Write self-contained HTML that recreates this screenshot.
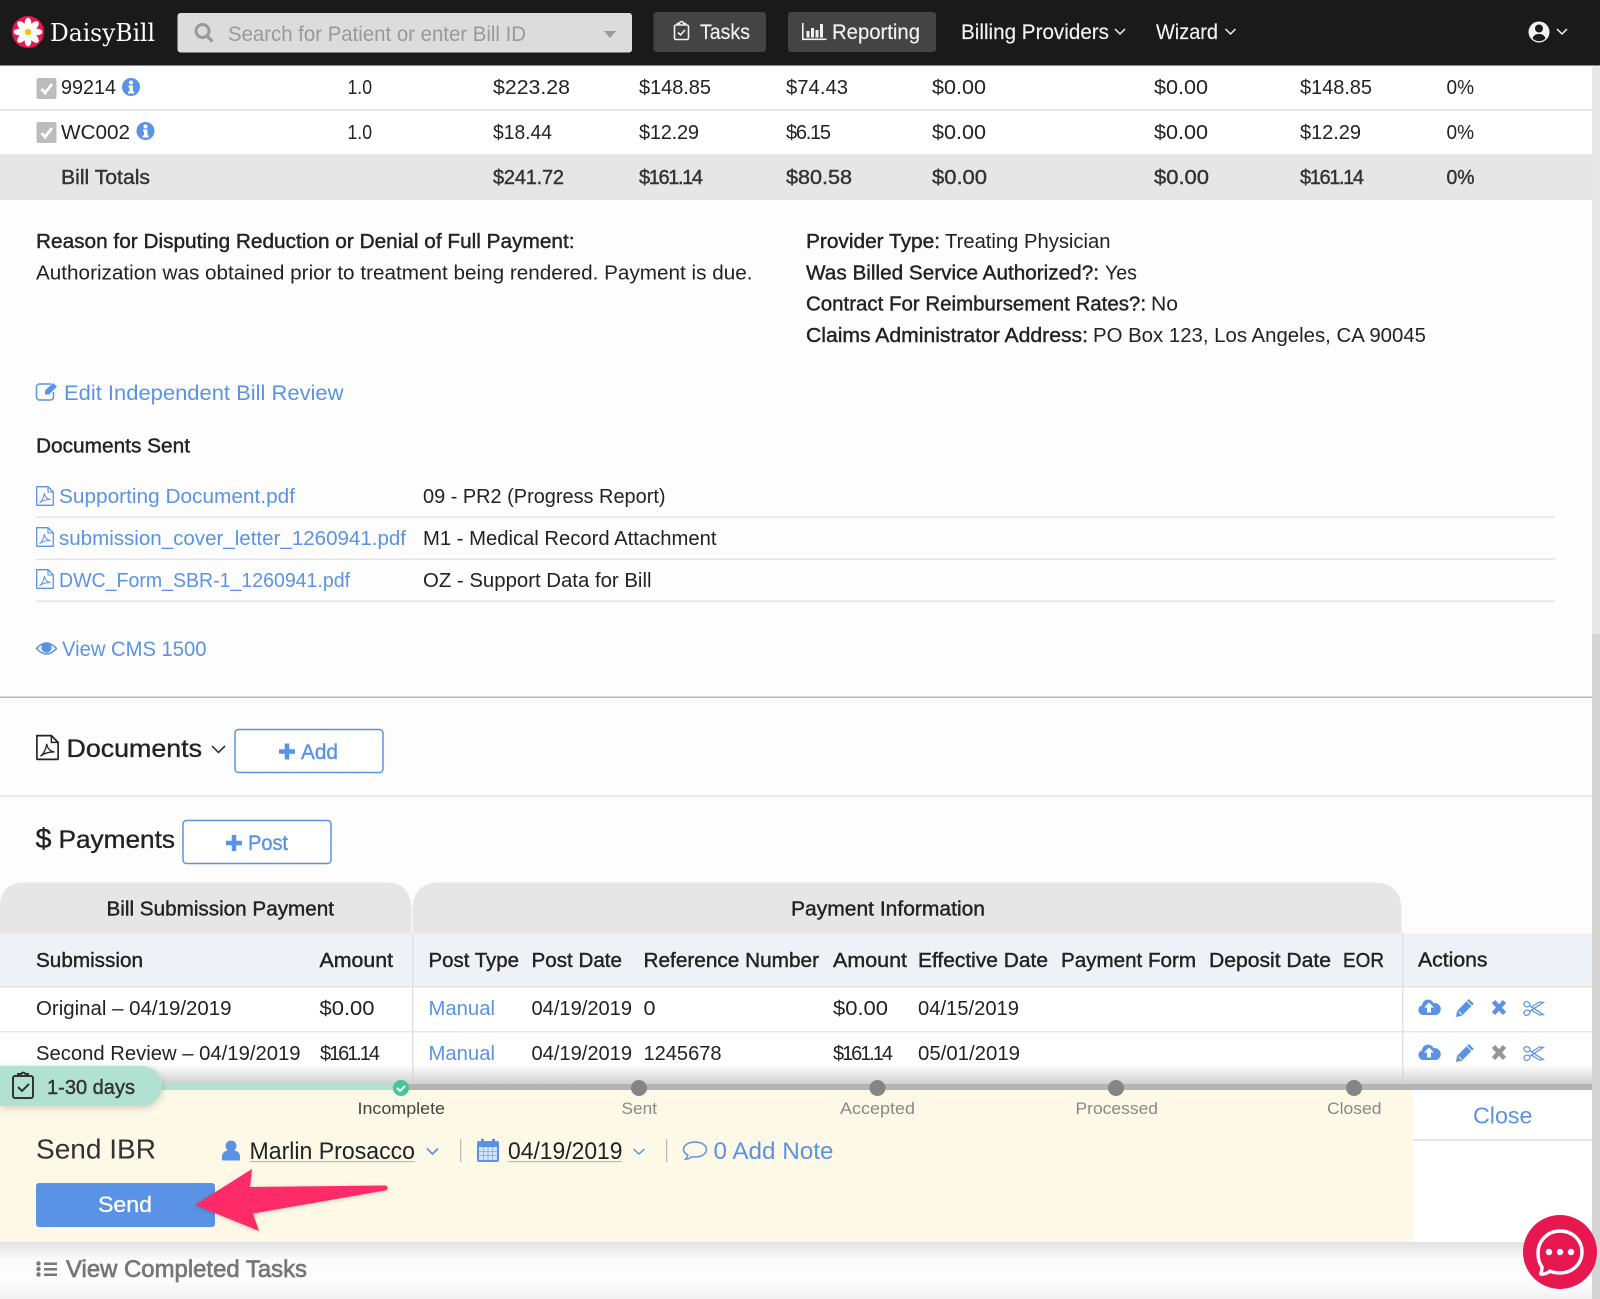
<!DOCTYPE html>
<html lang="en">
<head>
<meta charset="utf-8">
<title>DaisyBill</title>
<style>
html,body{margin:0;padding:0;background:#fdfdfd;width:1600px;height:1299px;overflow:hidden}
svg{display:block}
text{font-family:"Liberation Sans",sans-serif;font-size:20px;fill:#222;white-space:pre}
.s{stroke:#222;stroke-width:.4}
.g{fill:#333;stroke:#333;stroke-width:.4}
.a{fill:#5a93e6}
.n{fill:#f2f2f2;font-size:21px;stroke:#f2f2f2;stroke-width:.15}
.l{font-size:21px;fill:#5a93e6}
.m{font-size:17px;fill:#888}
.h{font-size:25px;fill:#222;stroke:#222;stroke-width:.35}
.b{font-size:21px;fill:#5a93e6;stroke:#5a93e6;stroke-width:.4}
.u{font-size:24px;fill:#222}
</style>
</head>
<body>
<svg xmlns="http://www.w3.org/2000/svg" width="1600" height="1299" viewBox="0 0 1600 1299">
<defs>
<symbol id="pdf" viewBox="0 0 18 20" overflow="visible">
<path d="M.7.7h11.300l5.300 5.300v12.800a.5.5 0 0 1-.5.5H1.200a.5.5 0 0 1-.5-.5z" fill="none" stroke="currentColor" stroke-width="1.300"/>
<path d="M12 .7v5.300h5.300" fill="none" stroke="currentColor" stroke-width="1.100"/>
<path d="M3.400 16.700c2.200-1 4.500-5.400 5-9.600.4 3.600 2.800 6 6.200 6.400-3.600-.2-7.600.8-11.200 3.200z" fill="none" stroke="currentColor" stroke-width="1"/>
</symbol>
<symbol id="chk" viewBox="0 0 20 21" overflow="visible">
<rect width="20" height="21" rx="2" fill="#bcbcbc"/>
<path d="M5 11l3.500 4 7-9" fill="none" stroke="#fff" stroke-width="2.800"/>
</symbol>
<symbol id="inf" viewBox="0 0 18 18" overflow="visible">
<circle cx="9" cy="9" r="9" fill="#5a93e6"/>
<circle cx="9" cy="4.500" r="2" fill="#fff"/>
<path d="M6.500 7.500H11v6h1.200v2H6v-2h1.500v-4h-1z" fill="#fff"/>
</symbol>
<symbol id="cloud" viewBox="0 0 22 16" overflow="visible">
<path d="M5 16a5 5 0 0 1-1-9.800A6 6 0 0 1 15.500 4.200 4.800 4.800 0 0 1 18 16z" fill="#5a93e6"/>
<path d="M11 3.500l5 5h-3v5h-4v-5H6z" fill="#fff"/>
</symbol>
<symbol id="pen" viewBox="0 0 18 18" overflow="visible">
<path d="M12.800 0l5 4.800L5.800 16.800 0 18l1-6z" fill="#5a93e6"/>
<path d="M2.500 12.500l3.300 3.200" stroke="#fff" stroke-width="1" fill="none"/>
<path d="M11 2.200l4.800 4.800" stroke="#fff" stroke-width="1" fill="none"/>
</symbol>
<symbol id="sci" viewBox="0 0 22 16" overflow="visible">
<g fill="none" stroke="#5a93e6" stroke-width="1.300">
<ellipse cx="4" cy="3.500" rx="3.300" ry="2.700" transform="rotate(20 4 3.500)"/>
<ellipse cx="4" cy="12.500" rx="3.300" ry="2.700" transform="rotate(-20 4 12.500)"/>
<path d="M7 5l14.500 9.500-4 .4L8 9.300"/>
<path d="M7 11L21.500 1.500l-4-.4L8 6.700"/>
</g>
</symbol>
<linearGradient id="fade" x1="0" y1="0" x2="0" y2="1">
<stop offset="0" stop-color="#d4d4d4" stop-opacity="0"/>
<stop offset="1" stop-color="#d0d0d0"/>
</linearGradient>
<linearGradient id="foot" x1="0" y1="0" x2="0" y2="1">
<stop offset="0" stop-color="#e2e2e2"/>
<stop offset=".32" stop-color="#fbfbfb"/>
<stop offset=".65" stop-color="#fdfdfd"/>
<stop offset="1" stop-color="#f3f3f3"/>
</linearGradient>
</defs>

<!-- page background -->
<rect width="1600" height="1299" fill="#fdfdfd"/>
<rect y="65" width="1592" height="89" fill="#fff"/>
<rect y="109" width="1592" height="2" fill="#e6e6e6"/>
<rect y="154" width="1592" height="46" fill="#e6e6e6"/>

<!-- scrollbar -->
<rect x="1592" y="66" width="8" height="1233" fill="#e8e8e8" rx="3"/>
<rect x="1592" y="634" width="8" height="665" fill="#d5d5d5"/>

<!-- bill table -->
<use href="#chk" x="36.500" y="78" width="20" height="21"/>
<text x="61" y="94" textLength="55" lengthAdjust="spacingAndGlyphs">99214</text>
<use href="#inf" x="122" y="78" width="18" height="18"/>
<use href="#chk" x="36.500" y="122" width="20" height="21"/>
<text x="61" y="139" textLength="69" lengthAdjust="spacingAndGlyphs">WC002</text>
<use href="#inf" x="136.500" y="122" width="18" height="18"/>

<text x="347.500" y="94" textLength="24.500" lengthAdjust="spacingAndGlyphs">1.0</text>
<text x="493" y="94" textLength="77" lengthAdjust="spacingAndGlyphs">$223.28</text>
<text x="639" y="94" textLength="72" lengthAdjust="spacing">$148.85</text>
<text x="786" y="94" textLength="62" lengthAdjust="spacingAndGlyphs">$74.43</text>
<text x="932" y="94" textLength="54" lengthAdjust="spacingAndGlyphs">$0.00</text>
<text x="1154" y="94" textLength="54" lengthAdjust="spacingAndGlyphs">$0.00</text>
<text x="1300" y="94" textLength="72" lengthAdjust="spacing">$148.85</text>
<text x="1446.500" y="94" textLength="27.500" lengthAdjust="spacingAndGlyphs">0%</text>

<text x="347.500" y="139" textLength="24.500" lengthAdjust="spacingAndGlyphs">1.0</text>
<text x="493" y="139" textLength="59" lengthAdjust="spacingAndGlyphs">$18.44</text>
<text x="639" y="139" textLength="60" lengthAdjust="spacing">$12.29</text>
<text x="786" y="139" textLength="45" lengthAdjust="spacing">$6.15</text>
<text x="932" y="139" textLength="54" lengthAdjust="spacingAndGlyphs">$0.00</text>
<text x="1154" y="139" textLength="54" lengthAdjust="spacingAndGlyphs">$0.00</text>
<text x="1300" y="139" textLength="61" lengthAdjust="spacing">$12.29</text>
<text x="1446.500" y="139" textLength="27.500" lengthAdjust="spacingAndGlyphs">0%</text>

<text class="g" x="61" y="184" textLength="89" lengthAdjust="spacingAndGlyphs">Bill Totals</text>
<text class="g" x="493" y="184" textLength="71" lengthAdjust="spacing">$241.72</text>
<text class="g" x="639" y="184" textLength="64" lengthAdjust="spacing">$161.14</text>
<text class="g" x="786" y="184" textLength="66" lengthAdjust="spacingAndGlyphs">$80.58</text>
<text class="g" x="932" y="184" textLength="55" lengthAdjust="spacingAndGlyphs">$0.00</text>
<text class="g" x="1154" y="184" textLength="55" lengthAdjust="spacingAndGlyphs">$0.00</text>
<text class="g" x="1300" y="184" textLength="64" lengthAdjust="spacing">$161.14</text>
<text class="g" x="1446.500" y="184" textLength="28" lengthAdjust="spacingAndGlyphs">0%</text>

<!-- review details -->
<text class="s" x="36" y="248" textLength="538.500" lengthAdjust="spacingAndGlyphs">Reason for Disputing Reduction or Denial of Full Payment:</text>
<text x="36" y="279.500" textLength="716.500" lengthAdjust="spacingAndGlyphs">Authorization was obtained prior to treatment being rendered. Payment is due.</text>
<text class="s" x="806" y="248" textLength="134" lengthAdjust="spacingAndGlyphs">Provider Type:</text>
<text x="945" y="248" textLength="165.500" lengthAdjust="spacingAndGlyphs">Treating Physician</text>
<text class="s" x="806" y="279.500" textLength="293" lengthAdjust="spacingAndGlyphs">Was Billed Service Authorized?:</text>
<text x="1105" y="279.500" textLength="32" lengthAdjust="spacingAndGlyphs">Yes</text>
<text class="s" x="806" y="310.500" textLength="340" lengthAdjust="spacingAndGlyphs">Contract For Reimbursement Rates?:</text>
<text x="1151" y="310.500" textLength="27" lengthAdjust="spacingAndGlyphs">No</text>
<text class="s" x="806" y="342" textLength="282" lengthAdjust="spacingAndGlyphs">Claims Administrator Address:</text>
<text x="1093" y="342" textLength="333" lengthAdjust="spacingAndGlyphs">PO Box 123, Los Angeles, CA 90045</text>

<!-- edit link -->
<path d="M53.500 392v5a3 3 0 0 1-3 3H39.500a3 3 0 0 1-3-3v-10a3 3 0 0 1 3-3H51" fill="none" stroke="#5a93e6" stroke-width="1.500"/>
<path d="M45 390.500l8-7.500 4 3.500-8 8H45z" fill="#5a93e6"/>
<text class="l" x="64" y="400" textLength="279.500" lengthAdjust="spacingAndGlyphs">Edit Independent Bill Review</text>

<text class="s" x="36" y="452.500" textLength="154" lengthAdjust="spacingAndGlyphs">Documents Sent</text>

<g style="color:#5a93e6">
<use href="#pdf" x="36" y="486" width="18" height="20"/>
<use href="#pdf" x="36" y="527" width="18" height="20"/>
<use href="#pdf" x="36" y="569" width="18" height="20"/>
</g>
<text class="a" x="59" y="503" textLength="236" lengthAdjust="spacingAndGlyphs">Supporting Document.pdf</text>
<text x="423" y="503" textLength="242.500" lengthAdjust="spacingAndGlyphs">09 - PR2 (Progress Report)</text>
<rect x="36" y="516.500" width="1519" height="1.500" fill="#e4e4e4"/>
<text class="a" x="59" y="545" textLength="347" lengthAdjust="spacingAndGlyphs">submission_cover_letter_1260941.pdf</text>
<text x="423" y="545" textLength="293.500" lengthAdjust="spacingAndGlyphs">M1 - Medical Record Attachment</text>
<rect x="36" y="558.500" width="1519" height="1.500" fill="#e4e4e4"/>
<text class="a" x="59" y="587" textLength="291" lengthAdjust="spacingAndGlyphs">DWC_Form_SBR-1_1260941.pdf</text>
<text x="423" y="587" textLength="228.500" lengthAdjust="spacingAndGlyphs">OZ - Support Data for Bill</text>
<rect x="36" y="600.500" width="1519" height="1.500" fill="#e4e4e4"/>

<!-- view cms -->
<path d="M36.500 648.500Q46.500 637.500 56.500 648.500 46.500 659.500 36.500 648.500z" fill="none" stroke="#5a93e6" stroke-width="1.500"/>
<circle cx="46.500" cy="647.500" r="5.200" fill="#5a93e6"/>
<text class="l" x="62" y="656" textLength="144.500" lengthAdjust="spacingAndGlyphs">View CMS 1500</text>

<rect y="696.500" width="1592" height="1.500" fill="#b9b9b9"/>

<!-- documents heading -->
<g style="color:#222"><use href="#pdf" x="36" y="734" width="23" height="27"/></g>
<text class="h" x="66.500" y="757" textLength="135.500" lengthAdjust="spacingAndGlyphs">Documents</text>
<path d="M212 746l6.500 6.500 6.500-6.500" fill="none" stroke="#222" stroke-width="1.500"/>
<rect x="235" y="729.500" width="148" height="43" rx="3.500" fill="#fff" stroke="#5a93e6" stroke-width="1.500"/>
<path d="M279 751.500h16M287 743.500v16" stroke="#5a93e6" stroke-width="4.500" fill="none"/>
<text class="b" x="301" y="759" textLength="37" lengthAdjust="spacingAndGlyphs">Add</text>
<rect y="795.500" width="1592" height="1.500" fill="#e4e4e4"/>

<!-- payments heading -->
<text class="h" x="35.500" y="848" textLength="16" lengthAdjust="spacingAndGlyphs" style="font-size:28px">$</text>
<text class="h" x="58.500" y="848" textLength="116.500" lengthAdjust="spacingAndGlyphs">Payments</text>
<rect x="183" y="820.500" width="148" height="43" rx="3.500" fill="#fff" stroke="#5a93e6" stroke-width="1.500"/>
<path d="M226 843h16M234 835v16" stroke="#5a93e6" stroke-width="4.500" fill="none"/>
<text class="b" x="248" y="850" textLength="40" lengthAdjust="spacingAndGlyphs">Post</text>

<!-- tabs -->
<path d="M0 934V907Q0 882.500 25 882.500H386Q411.500 882.500 411.500 910V934z" fill="#e6e6e6"/>
<path d="M412.500 934V910Q412.500 882.500 441 882.500H1373Q1401.500 882.500 1401.500 910V934z" fill="#e6e6e6"/>
<text class="s" x="106.500" y="915.500" textLength="227.500" lengthAdjust="spacingAndGlyphs">Bill Submission Payment</text>
<text class="s" x="791" y="915.500" textLength="194" lengthAdjust="spacingAndGlyphs">Payment Information</text>

<!-- payments table -->
<rect y="933.500" width="1592" height="52.500" fill="#eef1f6"/>
<rect y="986" width="1592" height="100" fill="#fff"/>
<rect y="986" width="1592" height="1.500" fill="#e6e6e6"/>
<rect y="1031" width="1592" height="1.500" fill="#e6e6e6"/>
<rect x="412" y="933.500" width="1.500" height="152.500" fill="#e0e0e0"/>
<rect x="1402" y="933.500" width="1.500" height="152.500" fill="#e0e0e0"/>

<text class="s" x="36" y="967" textLength="107" lengthAdjust="spacingAndGlyphs">Submission</text>
<text class="s" x="319.500" y="967" textLength="73.500" lengthAdjust="spacingAndGlyphs">Amount</text>
<text class="s" x="428.500" y="967" textLength="90.500" lengthAdjust="spacingAndGlyphs">Post Type</text>
<text class="s" x="531.500" y="967" textLength="90.500" lengthAdjust="spacingAndGlyphs">Post Date</text>
<text class="s" x="643.500" y="967" textLength="175.500" lengthAdjust="spacingAndGlyphs">Reference Number</text>
<text class="s" x="833" y="967" textLength="74" lengthAdjust="spacingAndGlyphs">Amount</text>
<text class="s" x="918" y="967" textLength="130" lengthAdjust="spacingAndGlyphs">Effective Date</text>
<text class="s" x="1061" y="967" textLength="135" lengthAdjust="spacingAndGlyphs">Payment Form</text>
<text class="s" x="1209" y="967" textLength="122" lengthAdjust="spacingAndGlyphs">Deposit Date</text>
<text class="s" x="1343" y="967" textLength="41" lengthAdjust="spacingAndGlyphs">EOR</text>
<text class="s" x="1418" y="966.500" textLength="69.500" lengthAdjust="spacingAndGlyphs">Actions</text>

<text x="36" y="1015" textLength="195.500" lengthAdjust="spacingAndGlyphs">Original – 04/19/2019</text>
<text x="319.500" y="1015" textLength="55" lengthAdjust="spacingAndGlyphs">$0.00</text>
<text class="a" x="428.500" y="1015" textLength="66.500" lengthAdjust="spacingAndGlyphs">Manual</text>
<text x="531.500" y="1015" textLength="100.500" lengthAdjust="spacingAndGlyphs">04/19/2019</text>
<text x="643.500" y="1015" textLength="12" lengthAdjust="spacingAndGlyphs">0</text>
<text x="833" y="1015" textLength="55" lengthAdjust="spacingAndGlyphs">$0.00</text>
<text x="918" y="1015" textLength="101" lengthAdjust="spacingAndGlyphs">04/15/2019</text>

<text x="36" y="1060" textLength="264.500" lengthAdjust="spacingAndGlyphs">Second Review – 04/19/2019</text>
<text x="320" y="1060" textLength="60" lengthAdjust="spacing">$161.14</text>
<text class="a" x="428.500" y="1060" textLength="66.500" lengthAdjust="spacingAndGlyphs">Manual</text>
<text x="531.500" y="1060" textLength="100.500" lengthAdjust="spacingAndGlyphs">04/19/2019</text>
<text x="643.500" y="1060" textLength="78" lengthAdjust="spacingAndGlyphs">1245678</text>
<text x="833" y="1060" textLength="60" lengthAdjust="spacing">$161.14</text>
<text x="918" y="1060" textLength="102" lengthAdjust="spacingAndGlyphs">05/01/2019</text>

<!-- action icons -->
<use href="#cloud" x="1418" y="999" width="22" height="16"/>
<use href="#pen" x="1456" y="999" width="18" height="18"/>
<path d="M1493.500 1001.500l11 12M1504.500 1001.500l-11 12" stroke="#5a93e6" stroke-width="4.600" fill="none"/>
<use href="#sci" x="1523" y="1001" width="21" height="15"/>
<use href="#cloud" x="1418" y="1044" width="22" height="16"/>
<use href="#pen" x="1456" y="1044" width="18" height="18"/>
<path d="M1493.500 1046.500l11 12M1504.500 1046.500l-11 12" stroke="#969696" stroke-width="4.600" fill="none"/>
<use href="#sci" x="1523" y="1046" width="21" height="15"/>

<text x="447" y="1097" textLength="173" lengthAdjust="spacingAndGlyphs" style="fill:#555">Mailed 04/19/2019</text>

<!-- fixed task panel -->
<rect y="1064" width="1592" height="20" fill="url(#fade)"/>
<rect y="1242" width="1592" height="57" fill="url(#foot)"/>
<rect y="1090" width="1413" height="152" fill="#fef9e7"/>
<rect x="1413" y="1090" width="179" height="152" fill="#fff"/>
<rect x="1413" y="1139" width="179" height="2" fill="#e4e4e4"/>
<rect y="1084" width="1592" height="6" fill="#b3b3b3"/>
<rect x="150" y="1084" width="250" height="6" fill="#b1e2d1"/>

<path d="M0 1066H142a20 20 0 0 1 0 40H0z" fill="#b1e2d1" style="filter:drop-shadow(0 2px 4px rgba(0,0,0,.18))"/>
<g fill="none" stroke="#333" stroke-width="2">
<rect x="13" y="1076" width="20" height="22" rx="2"/>
<path d="M18 1076v-2h3a2.500 2.500 0 0 1 4.500 0h2.500v2"/>
<path d="M18 1087l4 4 7-7"/>
</g>
<text class="g" x="47" y="1094" textLength="88" lengthAdjust="spacingAndGlyphs">1-30 days</text>

<circle cx="401" cy="1088" r="8" fill="#46c596"/>
<path d="M397 1088l3 3 5-5" fill="none" stroke="#fff" stroke-width="2"/>
<circle cx="639" cy="1088" r="8" fill="#858585"/>
<circle cx="877.500" cy="1088" r="8" fill="#858585"/>
<circle cx="1116" cy="1088" r="8" fill="#858585"/>
<circle cx="1354" cy="1088" r="8" fill="#858585"/>
<text class="m" x="357.500" y="1114" textLength="87.500" lengthAdjust="spacingAndGlyphs" style="fill:#444">Incomplete</text>
<text class="m" x="621.500" y="1114" textLength="35.500" lengthAdjust="spacingAndGlyphs">Sent</text>
<text class="m" x="840" y="1114" textLength="75" lengthAdjust="spacingAndGlyphs">Accepted</text>
<text class="m" x="1075.500" y="1114" textLength="82.500" lengthAdjust="spacingAndGlyphs">Processed</text>
<text class="m" x="1327" y="1114" textLength="54.500" lengthAdjust="spacingAndGlyphs">Closed</text>

<text x="1473" y="1123.500" textLength="59.500" lengthAdjust="spacingAndGlyphs" style="font-size:23px;fill:#5a93e6">Close</text>

<text x="36" y="1158.500" textLength="120" lengthAdjust="spacingAndGlyphs" style="font-size:28px;fill:#333">Send IBR</text>

<circle cx="231" cy="1146" r="5.500" fill="#5a93e6"/>
<path d="M222 1160v-3.500a6 6 0 0 1 6-6h6a6 6 0 0 1 6 6v3.500a.5.500 0 0 1-.5.500h-17a.5.500 0 0 1-.5-.5z" fill="#5a93e6"/>
<text class="u" x="249.500" y="1159" textLength="165.500" lengthAdjust="spacingAndGlyphs">Marlin Prosacco</text>
<rect x="250" y="1161" width="165" height="1.200" fill="#bbb"/>
<path d="M427 1148.500l5.500 5.500 5.500-5.500" fill="none" stroke="#5a93e6" stroke-width="1.800"/>
<rect x="460" y="1139" width="1.300" height="23" fill="#bbb"/>

<rect x="477" y="1141" width="22" height="21" rx="2" fill="#5a93e6"/>
<rect x="479" y="1147" width="18" height="13" fill="#d6e4fa"/>
<path d="M479 1151.500h18M479 1155.500h18M483.500 1147v13M488 1147v13M492.500 1147v13" stroke="#7ba8ec" stroke-width=".8" fill="none"/>
<rect x="481" y="1138.500" width="3" height="6" rx="1.500" fill="#5a93e6"/>
<rect x="492" y="1138.500" width="3" height="6" rx="1.500" fill="#5a93e6"/>
<text class="u" x="508" y="1159" textLength="114.500" lengthAdjust="spacingAndGlyphs">04/19/2019</text>
<rect x="508" y="1161" width="114" height="1.200" fill="#bbb"/>
<path d="M633.500 1149l5.500 5 5.500-5" fill="none" stroke="#5a93e6" stroke-width="1.500"/>
<rect x="666" y="1139" width="1.300" height="23" fill="#bbb"/>

<path d="M695 1142c6.300 0 11.500 3.300 11.500 7.500s-5.200 7.500-11.500 7.500c-1 0-2 0-3-.3-1.700 1.300-4 2.300-6.500 2.500 1.200-1.300 2-2.700 2.300-4.100-2.600-1.300-4.300-3.300-4.300-5.600 0-4.200 5.200-7.500 11.500-7.500z" fill="none" stroke="#5a93e6" stroke-width="1.500"/>
<text class="u" x="713.500" y="1159" textLength="120" lengthAdjust="spacingAndGlyphs" style="fill:#5a93e6">0 Add Note</text>

<rect x="36" y="1183" width="179" height="44" rx="3" fill="#5a93e6"/>
<text x="98" y="1212" textLength="54" lengthAdjust="spacingAndGlyphs" style="font-size:22px;fill:#fff;stroke:#fff;stroke-width:.3">Send</text>

<path d="M195 1205L252 1169 250 1187 385 1185.500Q388 1186 387.500 1188.500 387 1190 385 1190.500L253 1213.500 259 1231z" fill="#ff2a68" style="filter:drop-shadow(0 1px 2px rgba(0,0,0,.2))"/>

<!-- completed tasks -->
<g fill="#777">
<circle cx="38.500" cy="1263.500" r="2.200"/><circle cx="38.500" cy="1269" r="2.200"/><circle cx="38.500" cy="1274.500" r="2.200"/>
<rect x="44" y="1262.500" width="13" height="2.500"/><rect x="44" y="1268" width="13" height="2.500"/><rect x="44" y="1273.500" width="13" height="2.500"/>
</g>
<text x="66" y="1277" textLength="241" lengthAdjust="spacingAndGlyphs" style="font-size:24px;fill:#777;stroke:#777;stroke-width:.7">View Completed Tasks</text>

<!-- header -->
<rect width="1600" height="65" fill="#1a1a1a"/>
<rect y="65" width="1600" height="1" fill="#888"/>
<circle cx="28" cy="32" r="16" fill="#e8174f"/>
<g fill="#fff">
<ellipse cx="28" cy="23.500" rx="3.400" ry="5.800"/>
<ellipse cx="28" cy="23.500" rx="3.400" ry="5.800" transform="rotate(45 28 32)"/>
<ellipse cx="28" cy="23.500" rx="3.400" ry="5.800" transform="rotate(90 28 32)"/>
<ellipse cx="28" cy="23.500" rx="3.400" ry="5.800" transform="rotate(135 28 32)"/>
<ellipse cx="28" cy="23.500" rx="3.400" ry="5.800" transform="rotate(180 28 32)"/>
<ellipse cx="28" cy="23.500" rx="3.400" ry="5.800" transform="rotate(225 28 32)"/>
<ellipse cx="28" cy="23.500" rx="3.400" ry="5.800" transform="rotate(270 28 32)"/>
<ellipse cx="28" cy="23.500" rx="3.400" ry="5.800" transform="rotate(315 28 32)"/>
</g>
<circle cx="28" cy="32" r="3.300" fill="#f9c80e"/>
<text x="50" y="41" textLength="105" lengthAdjust="spacingAndGlyphs" style="font-family:'DejaVu Serif','Liberation Serif',serif;font-size:24px;fill:#fff">DaisyBill</text>

<rect x="177.500" y="13" width="454.500" height="39.500" rx="3" fill="#dcdcdc"/>
<circle cx="202.500" cy="31" r="6.500" fill="none" stroke="#999" stroke-width="3"/>
<path d="M207 36l5.500 5.500" stroke="#999" stroke-width="3.200" fill="none"/>
<text x="228" y="41" textLength="298" lengthAdjust="spacingAndGlyphs" style="font-size:21px;fill:#999">Search for Patient or enter Bill ID</text>
<path d="M604 31h12l-6 7z" fill="#999"/>

<rect x="653.500" y="12" width="112.500" height="40" rx="3" fill="#444"/>
<g fill="none" stroke="#f2f2f2" stroke-width="1.600">
<rect x="674.500" y="25" width="14" height="14.500" rx="1.500"/>
<path d="M677.500 25v-1.500h2a2 2 0 0 1 4 0h2V25"/>
<path d="M678 32.500l2.500 2.500 4.500-5"/>
</g>
<text class="n" x="700" y="39" textLength="50" lengthAdjust="spacingAndGlyphs">Tasks</text>

<rect x="788" y="12" width="148" height="40" rx="3" fill="#444"/>
<g fill="#f2f2f2">
<rect x="802" y="23" width="1.600" height="17"/><rect x="802" y="38.500" width="24.500" height="1.600"/>
<rect x="806.500" y="31" width="3" height="6.500"/><rect x="811" y="28" width="3" height="9.500"/><rect x="815.500" y="30" width="3" height="7.500"/><rect x="820" y="24" width="3" height="13.500"/>
</g>
<text class="n" x="832" y="39" textLength="88" lengthAdjust="spacingAndGlyphs">Reporting</text>

<text class="n" x="961" y="39" textLength="148" lengthAdjust="spacingAndGlyphs">Billing Providers</text>
<path d="M1115 29l5 5 5-5" fill="none" stroke="#f2f2f2" stroke-width="1.500"/>
<text class="n" x="1156" y="39" textLength="62" lengthAdjust="spacingAndGlyphs">Wizard</text>
<path d="M1225.500 29l5 5 5-5" fill="none" stroke="#f2f2f2" stroke-width="1.500"/>

<circle cx="1539" cy="32" r="10.500" fill="#f2f2f2"/>
<circle cx="1539" cy="28.500" r="4" fill="#1a1a1a"/>
<path d="M1532.500 38.500c1-3.500 3.500-4.500 6.500-4.500s5.500 1 6.500 4.500c-1.600 1.700-3.900 2.700-6.500 2.700s-4.900-1-6.500-2.700z" fill="#1a1a1a"/>
<path d="M1557 29l5 5 5-5" fill="none" stroke="#f2f2f2" stroke-width="1.500"/>

<!-- chat bubble -->
<circle cx="1560" cy="1252" r="37" fill="#e8174f"/>
<path d="M1560 1231c12.700 0 22 9.300 22 21s-9.300 21-22 21c-4 0-7-.6-10-1.800-2.300 1.800-5.500 3-8.500 3-.7 0-1-.5-.7-1 .8-1.400 1.200-4.500 1.200-6.200-2.800-3.700-4-8.600-4-14 0-11.700 9.300-22 22-22z" fill="none" stroke="#fff" stroke-width="3.400"/>
<circle cx="1549" cy="1252" r="3.200" fill="#fff"/>
<circle cx="1560" cy="1252" r="3.200" fill="#fff"/>
<circle cx="1571" cy="1252" r="3.200" fill="#fff"/>
</svg>
</body>
</html>
